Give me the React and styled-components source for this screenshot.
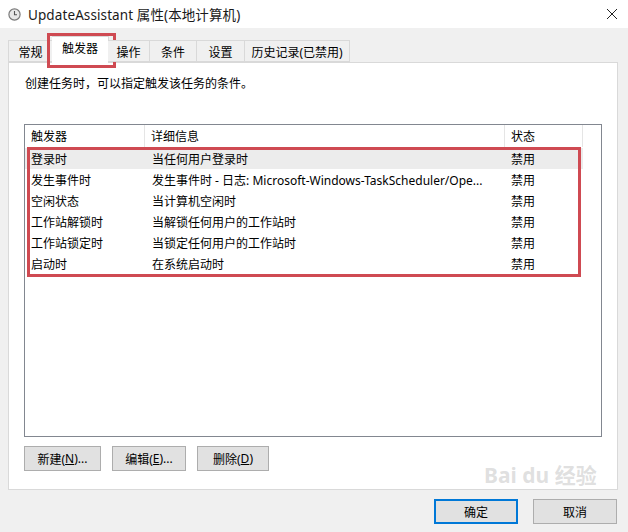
import styled, { createGlobalStyle } from "styled-components";

const GlobalStyle = createGlobalStyle`
  html, body {
    margin: 0;
    padding: 0;
    background: #f0f0f0;
  }
  body {
    width: 628px;
    height: 532px;
    overflow: hidden;
    font-family: "Noto Sans", "Noto Sans CJK SC", sans-serif;
    font-size: 12px;
    color: #000;
  }
`;

const Window = styled.div`
  width: 628px;
  height: 532px;
  display: flex;
  flex-direction: column;
  background: #f0f0f0;
  position: relative;
`;

const TitleBar = styled.div`
  height: 28px;
  background: #fff;
  display: flex;
  align-items: center;
  padding: 0 10px 0 8px;
  gap: 7px;
`;

const Title = styled.div`
  flex: 1;
  font-size: 13.5px;
  color: #1a1a1a;
  letter-spacing: 0.1px;
`;

const TabStrip = styled.div`
  display: flex;
  align-items: flex-end;
  padding-left: 8px;
  margin-top: 7px;
  height: 27px;
  position: relative;
  z-index: 1;
`;

const Tab = styled.div`
  position: relative;
  width: ${(p) => p.w}px;
  height: ${(p) => (p.active ? 27 : 22)}px;
  box-sizing: border-box;
  display: flex;
  align-items: center;
  justify-content: center;
  border: 1px solid #d9d9d9;
  border-bottom: ${(p) => (p.active ? "none" : "1px solid #d9d9d9")};
  margin-left: ${(p) => (p.active ? -1 : 0)}px;
  margin-right: ${(p) => (p.active ? -1 : 0)}px;
  margin-bottom: ${(p) => (p.active ? -1 : 0)}px;
  background: ${(p) => (p.active ? "#fff" : "#f0f0f0")};
  padding-top: ${(p) => (p.active ? 0 : 1)}px;
  padding-bottom: ${(p) => (p.active ? 5 : 0)}px;
  & + & {
    border-left: ${(p) => (p.active ? "1px solid #d9d9d9" : "none")};
  }
`;

const Highlight = styled.span`
  position: absolute;
  left: -5px;
  right: -8px;
  top: -4px;
  bottom: -5px;
  border: 3px solid #cf4a52;
  pointer-events: none;
`;

const Panel = styled.div`
  margin: 0 10px 0 8px;
  height: 428px;
  box-sizing: border-box;
  background: #fff;
  border: 1px solid #d9d9d9;
  display: flex;
  flex-direction: column;
  padding: 11px 15px 0 15px;
`;

const Description = styled.div`
  padding-left: 1px;
  line-height: 20px;
`;

const Table = styled.div`
  margin-top: 30px;
  height: 313px;
  width: 578px;
  box-sizing: border-box;
  border: 1px solid #828790;
  display: flex;
  flex-direction: column;
`;

const HeaderRow = styled.div`
  display: flex;
  height: 22px;
  flex-shrink: 0;
`;

const HeaderCell = styled.div`
  width: ${(p) => p.w}px;
  box-sizing: border-box;
  border-right: 1px solid #e5e5e5;
  padding-left: 6px;
  display: flex;
  align-items: center;
`;

const Body = styled.div`
  position: relative;
  padding-top: 1px;
`;

const Row = styled.div`
  display: flex;
  height: 21px;
  width: 558px;
  background: ${(p) => (p.selected ? "#ececec" : "transparent")};
`;

const Cell = styled.div`
  width: ${(p) => p.w}px;
  box-sizing: border-box;
  padding-left: ${(p) => p.pad}px;
  display: flex;
  align-items: center;
  white-space: nowrap;
  overflow: hidden;
`;

const RowsBox = styled.span`
  position: absolute;
  left: 2px;
  top: 0px;
  width: 554px;
  height: 130px;
  box-sizing: border-box;
  border: 3px solid #cf4a52;
  pointer-events: none;
`;

const ButtonRow = styled.div`
  display: flex;
  gap: 11px;
  margin-top: 9px;
`;

const Button = styled.button`
  width: ${(p) => p.w}px;
  height: 25px;
  box-sizing: border-box;
  background: #e1e1e1;
  border: ${(p) => (p.primary ? "2px solid #0078d7" : "1px solid #adadad")};
  font-family: inherit;
  font-size: 12px;
  color: #000;
  padding: 0;
  display: flex;
  align-items: center;
  justify-content: center;
`;

const Footer = styled.div`
  display: flex;
  justify-content: flex-end;
  gap: 15px;
  padding: 9px 11px 0 0;
`;

const Watermark = styled.div`
  position: absolute;
  left: 484px;
  top: 465px;
  color: rgba(185, 185, 185, 0.45);
  font-size: 21px;
  font-weight: bold;
  white-space: nowrap;
  pointer-events: none;
  line-height: 1;
`;

const ClockIcon = () => (
  <svg width="13" height="13" viewBox="0 0 13 13">
    <circle cx="6.5" cy="6.5" r="5.6" fill="#e8e8e8" stroke="#7a7a7a" strokeWidth="1.2" />
    <path d="M6.5 3 V6.7 H9" fill="none" stroke="#555" strokeWidth="1.1" />
  </svg>
);

const CloseIcon = () => (
  <svg width="12" height="12" viewBox="0 0 12 12">
    <path d="M1 1 L11 11 M11 1 L1 11" stroke="#222" strokeWidth="1" />
  </svg>
);

const tabs = [
  { label: "常规", w: 45 },
  { label: "触发器", w: 57, active: true },
  { label: "操作", w: 42 },
  { label: "条件", w: 47 },
  { label: "设置", w: 48 },
  { label: "历史记录(已禁用)", w: 105 },
];

const triggers = [
  ["登录时", "当任何用户登录时", "禁用"],
  ["发生事件时", "发生事件时 - 日志: Microsoft-Windows-TaskScheduler/Ope...", "禁用"],
  ["空闲状态", "当计算机空闲时", "禁用"],
  ["工作站解锁时", "当解锁任何用户的工作站时", "禁用"],
  ["工作站锁定时", "当锁定任何用户的工作站时", "禁用"],
  ["启动时", "在系统启动时", "禁用"],
];

const Underlined = styled.span`
  text-decoration: underline;
`;

export default function App() {
  return (
    <>
      <GlobalStyle />
      <Window>
        <TitleBar>
          <ClockIcon />
          <Title>UpdateAssistant 属性(本地计算机)</Title>
          <CloseIcon />
        </TitleBar>

        <TabStrip>
          {tabs.map((t) => (
            <Tab key={t.label} w={t.w} active={t.active}>
              {t.label}
              {t.active && <Highlight />}
            </Tab>
          ))}
        </TabStrip>

        <Panel>
          <Description>创建任务时，可以指定触发该任务的条件。</Description>
          <Table>
            <HeaderRow>
              <HeaderCell w={120}>触发器</HeaderCell>
              <HeaderCell w={360}>详细信息</HeaderCell>
              <HeaderCell w={78}>状态</HeaderCell>
            </HeaderRow>
            <Body>
              {triggers.map((r, i) => (
                <Row key={r[0]} selected={i === 0}>
                  <Cell w={120} pad={6}>{r[0]}</Cell>
                  <Cell w={360} pad={7}>{r[1]}</Cell>
                  <Cell w={78} pad={6}>{r[2]}</Cell>
                </Row>
              ))}
              <RowsBox />
            </Body>
          </Table>
          <ButtonRow>
            <Button w={77}>新建(<Underlined>N</Underlined>)...</Button>
            <Button w={74}>编辑(<Underlined>E</Underlined>)...</Button>
            <Button w={72}>删除(<Underlined>D</Underlined>)</Button>
          </ButtonRow>
        </Panel>

        <Footer>
          <Button w={84} primary>确定</Button>
          <Button w={84}>取消</Button>
        </Footer>

        <Watermark>Bai du 经验</Watermark>
      </Window>
    </>
  );
}
